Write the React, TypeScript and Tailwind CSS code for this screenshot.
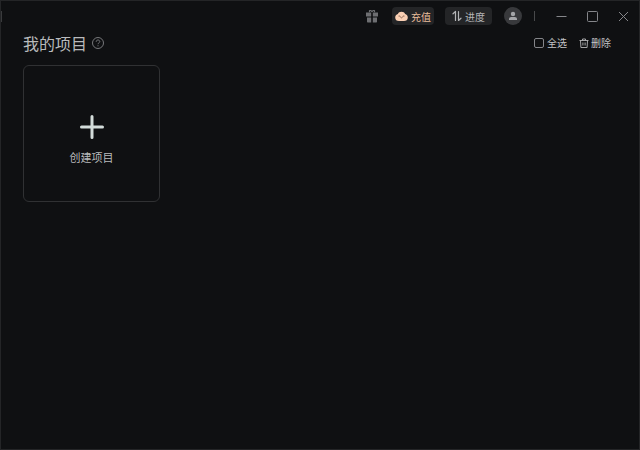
import { useState } from "react";

function GiftIcon() {
  return (
    <svg className="h-[14px] w-[14px]" viewBox="0 0 14 14" fill="#6d6e71">
      <path d="M1 3.500h5.200v4H1zM7.800 3.500H13v4H7.800z" />
      <path d="M2 8.500h4.200v5H2.700a.7.7 0 0 1-.7-.7zM7.800 8.500H12v4.300a.7.7 0 0 1-.7.7H7.800z" />
      <path d="M4.500 3.300V1.500h1.300L7 2.600l1.200-1.100h1.300v1.800" fill="none" stroke="#6d6e71" strokeWidth="1.200" strokeLinejoin="round" />
    </svg>
  );
}

function MascotIcon() {
  return (
    <svg className="h-[11px] w-[13px]" viewBox="0 0 13 11">
      <path
        d="M6.500.8c1.800 0 3.100.8 3.600 2.200 1.600.4 2.700 1.600 2.700 3.400 0 2.300-1.500 3.600-3.800 3.600H4C1.700 10 .2 8.700.2 6.400c0-1.800 1.100-3 2.700-3.400C3.400 1.600 4.700.8 6.500.8z"
        fill="#fbd0b4"
      />
      <path d="M4.200 4.800v.6M8.800 4.800v.6M5.400 5.900l1.100.9 1.100-.9" fill="none" stroke="#6b4a3a" strokeWidth=".8" strokeLinecap="round" />
    </svg>
  );
}

function ProgressIcon() {
  return (
    <svg className="h-[12px] w-[10px]" viewBox="0 0 10 12" fill="none" stroke="#b4b5b7" strokeWidth="1.200" strokeLinecap="round" strokeLinejoin="round">
      <path d="M1 3.800 3.500 1.500V10.500M6.500 1.500V10.500L9 8.200" />
    </svg>
  );
}

function UserIcon() {
  return (
    <svg className="h-[10px] w-[10px]" viewBox="0 0 10 10" fill="#a5a6a9">
      <circle cx="5" cy="3" r="2.200" />
      <path d="M1 9V8c0-1.300 1-2 2.200-2h3.600C8 6 9 6.700 9 8v1z" />
    </svg>
  );
}

function TrashIcon() {
  return (
    <svg className="h-[10px] w-[10px]" viewBox="0 0 10 10" fill="none" stroke="#b4b5b7" strokeWidth=".9">
      <path d="M.5 2.500h9M3.500 2.500v-1.500h3v1.500M1.500 2.500l.4 7h6.200l.4-7M3.900 4.500v3M6.100 4.500v3" />
    </svg>
  );
}

function TitleBar() {
  return (
    <header className="flex h-[30px] items-center justify-between">
      <div className="h-[11px] w-px bg-[#3a3b3d]" />
      <div className="flex items-center">
        <button aria-label="礼物" className="mr-[13px]">
          <GiftIcon />
        </button>
        <button className="mr-[11px] flex h-[18px] w-[42px] items-center justify-center gap-[3px] rounded bg-[#242527] text-[10px] text-[#e9bd9b]">
          <MascotIcon />
          充值
        </button>
        <button className="mr-3 flex h-[18px] w-[47px] items-center justify-center gap-[3px] rounded bg-[#242527] text-[10px] text-[#b4b5b7]">
          <ProgressIcon />
          进度
        </button>
        <button aria-label="用户" className="mr-3 flex h-[18px] w-[18px] items-center justify-center rounded-full bg-[#38393c]">
          <UserIcon />
        </button>
        <div className="h-[10px] w-px bg-[#48494b]" />
        <div className="ml-[21px] mr-[10px] flex items-center gap-5">
          <button aria-label="最小化">
            <svg className="h-[11px] w-[11px]" viewBox="0 0 11 11" stroke="#85868a">
              <path d="M.5 5.500h10" />
            </svg>
          </button>
          <button aria-label="最大化">
            <svg className="h-[11px] w-[11px]" viewBox="0 0 11 11" fill="none" stroke="#85868a">
              <rect x=".5" y=".5" width="10" height="10" rx="1" />
            </svg>
          </button>
          <button aria-label="关闭">
            <svg className="h-[11px] w-[11px]" viewBox="0 0 11 11" stroke="#85868a">
              <path d="m1 1 9 9M10 1l-9 9" />
            </svg>
          </button>
        </div>
      </div>
    </header>
  );
}

export default function App() {
  const [allSelected, setAllSelected] = useState(false);

  return (
    <div className="min-h-screen border border-[#242527] bg-[#0f1012] font-['Noto_Sans_CJK_SC','Noto_Sans',sans-serif]">
      <TitleBar />
      <main className="pl-[22px] pr-7">
        <div className="flex h-[23px] items-center justify-between">
          <div className="flex items-center gap-[5px]">
            <h1 className="text-[16px] leading-6 text-[#b9babc]">我的项目</h1>
            <button aria-label="帮助">
              <svg className="h-[12px] w-[12px]" viewBox="0 0 12 12" fill="none" stroke="#77787b">
                <circle cx="6" cy="6" r="5.500" />
                <path d="M4.200 4.800c0-1.100.8-1.800 1.800-1.800s1.800.7 1.800 1.600c0 1.100-1.800 1.300-1.800 2.600M6 8.300v1" />
              </svg>
            </button>
          </div>
          <div className="flex items-center gap-3 text-[10px] text-[#c4c5c7]">
            <label className="flex items-center gap-[3px]">
              <input
                type="checkbox"
                checked={allSelected}
                onChange={(e) => setAllSelected(e.target.checked)}
                className="h-[10px] w-[10px] appearance-none rounded-[2px] border border-[#85868a] checked:bg-[#85868a]"
              />
              全选
            </label>
            <button className="flex items-center gap-[2px]">
              <TrashIcon />
              删除
            </button>
          </div>
        </div>

        {/* Project grid */}
        <div className="mt-[11px] flex flex-wrap gap-4">
          <button className="flex h-[137px] w-[137px] flex-col items-center justify-center gap-[10px] rounded-md border border-[#303133] pt-3 text-[#b9babc]">
            <svg className="h-6 w-6" viewBox="0 0 24 24" fill="none" stroke="#d3dcda" strokeWidth="3" strokeLinecap="round">
              <path d="M12 1.500v21M1.500 12h21" />
            </svg>
            <span className="text-[11px] leading-4">创建项目</span>
          </button>
        </div>
      </main>
    </div>
  );
}
